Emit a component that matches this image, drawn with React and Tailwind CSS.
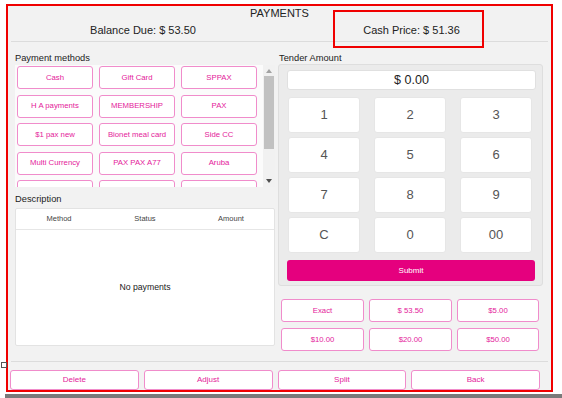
import React from "react";

const methods = [
  "Cash", "Gift Card", "SPPAX",
  "H A payments", "MEMBERSHIP", "PAX",
  "$1 pax new", "Bionet meal card", "Side CC",
  "Multi Currency", "PAX PAX A77", "Aruba",
  "", "", "",
];

const keys = ["1", "2", "3", "4", "5", "6", "7", "8", "9", "C", "0", "00"];
const quick = ["Exact", "$ 53.50", "$5.00", "$10.00", "$20.00", "$50.00"];
const footer = ["Delete", "Adjust", "Split", "Back"];

const pinkBtn =
  "flex items-center justify-center bg-white border border-[#f08ccb] rounded-[3px] text-[#e4229a] text-[7.75px] leading-none";

export default function App() {
  return (
    <div className="relative w-[562px] h-[398px] bg-white overflow-hidden font-['Liberation_Sans',Arial,sans-serif] text-[#222]">
      <div className="pt-[4px]">
        <div className="ml-[6px] w-[547px] h-[388px] border-2 border-[#f00000] bg-[#f2f2f2] flex flex-col">
          {/* header */}
          <div className="h-[14px] leading-[14px] text-[11px] text-center">PAYMENTS</div>
          <div className="h-[22px] flex items-center text-[11px] border-b border-[#dcdcdc] mx-[3px]">
            <div className="w-[264px] text-center">Balance Due: $ 53.50</div>
            <div className="flex-1 text-center">Cash Price: $ 51.36</div>
          </div>

          {/* body */}
          <div className="flex-1 flex">
            {/* left column */}
            <div className="ml-[7px] w-[260px] flex flex-col">
              <div className="mt-[10px] h-[12px] leading-[12px] text-[9.3px]">Payment methods</div>
              <div className="mt-[1px] h-[122px] flex">
                <div className="w-[248px] bg-[#fbfbfb] overflow-hidden pl-[2px] pt-[1px]">
                  <div className="grid grid-cols-[76px_76px_76px] gap-x-[6px] gap-y-[5.5px]">
                    {methods.map((m, i) => (
                      <div key={i} className={`${pinkBtn} h-[23px]`}>{m}</div>
                    ))}
                  </div>
                </div>
                <div className="w-[12px] bg-[#f1f1f1] flex flex-col items-center">
                  <div className="h-[11px] flex items-center justify-center">
                    <svg width="6" height="4" viewBox="0 0 6 4"><path d="M3 0L6 4H0Z" fill="#a3a3a3" /></svg>
                  </div>
                  <div className="w-[10px] h-[73px] bg-[#c1c1c1]" />
                  <div className="flex-1" />
                  <div className="h-[12px] flex items-center justify-center">
                    <svg width="6" height="4" viewBox="0 0 6 4"><path d="M0 0H6L3 4Z" fill="#505050" /></svg>
                  </div>
                </div>
              </div>
              <div className="mt-[6px] h-[12px] leading-[12px] text-[9.3px]">Description</div>
              <div className="mt-[3px] h-[138px] bg-white border border-[#e3e3e3] rounded-[2px] flex flex-col">
                <div className="h-[21px] grid grid-cols-3 items-center text-center text-[7.5px] text-[#444] border-b border-[#e6e6e6]">
                  <div>Method</div>
                  <div>Status</div>
                  <div>Amount</div>
                </div>
                <div className="flex-1 flex items-center justify-center text-[8.7px]">No payments</div>
              </div>
            </div>

            {/* right column */}
            <div className="ml-[3px] w-[265px] flex flex-col">
              <div className="mt-[10px] ml-[1px] h-[12px] leading-[12px] text-[9.3px]">Tender Amount</div>
              <div className="h-[222px] bg-[#ebebeb] border border-[#dedede] rounded-[3px] pl-[8px] pt-[5px]">
                <div className="w-[249px] h-[20px] bg-white border border-[#e0e0e0] rounded-[3px] flex items-center justify-center text-[12.5px] text-[#222]">
                  $ 0.00
                </div>
                <div className="mt-[7px] ml-[1px] grid grid-cols-[72px_72px_72px] gap-x-[14px] gap-y-[4px]">
                  {keys.map((k) => (
                    <div key={k} className="h-[36px] bg-white rounded-[3px] border border-[#e6e6e6] flex items-center justify-center text-[13px] text-[#555]">
                      {k}
                    </div>
                  ))}
                </div>
                <div className="mt-[7px] w-[248px] h-[21px] bg-[#e5007e] rounded-[3px] flex items-center justify-center text-white text-[8px]">
                  Submit
                </div>
              </div>
              <div className="mt-[13px] ml-[3px] grid grid-cols-[83px_83px_82px] gap-x-[5px] gap-y-[6px]">
                {quick.map((q) => (
                  <div key={q} className={`${pinkBtn} h-[23px]`}>{q}</div>
                ))}
              </div>
            </div>
          </div>

          {/* footer */}
          <div className="mx-[3px] border-t border-[#dcdcdc] pt-[8px]">
            <div className="ml-[-1px] w-[530px] grid grid-cols-4 gap-x-[5px]">
              {footer.map((f) => (
                <div key={f} className={`${pinkBtn} h-[20px] text-[8px]`}>{f}</div>
              ))}
            </div>
          </div>
        </div>
        <div className="mt-[2px] ml-[5px] h-[4px] bg-[#7a7a7a]" />
      </div>

      {/* annotation box around cash price */}
      <div className="absolute left-[333px] top-[10px] w-[151px] h-[38px] border-2 border-[#f00000]" />
      {/* small marker square */}
      <div className="absolute left-[1px] top-[362px] w-[6px] h-[6px] border border-[#555] bg-white" />
    </div>
  );
}
